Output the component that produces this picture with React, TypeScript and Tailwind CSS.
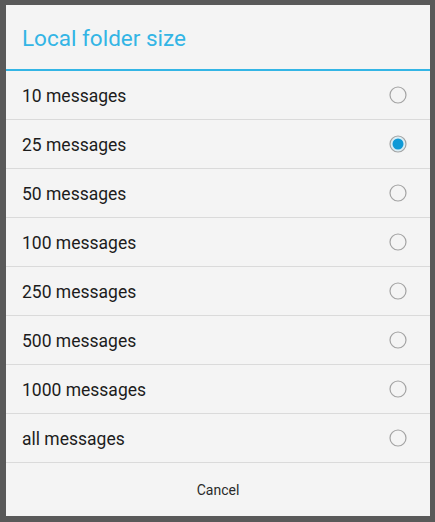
import React, { useState } from "react";

const options = [
  "10 messages",
  "25 messages",
  "50 messages",
  "100 messages",
  "250 messages",
  "500 messages",
  "1000 messages",
  "all messages",
];

function Radio({ checked }: { checked: boolean }) {
  return (
    <svg width="18" height="18" viewBox="0 0 18 18" className="shrink-0">
      <circle cx="9" cy="9" r="8" fill={checked ? "#d9edf5" : "none"} stroke="#a3a3a3" strokeWidth="1.2" />
      {checked && <circle cx="9" cy="9" r="5.5" fill="#0f99d6" />}
    </svg>
  );
}

export default function App() {
  const [selected, setSelected] = useState(1);

  return (
    <main className="w-[435px] h-[522px] bg-[#595959] pt-[5px] pl-[6px] font-['Roboto',sans-serif]">
      <div className="w-[424px] h-[511px] bg-[#f4f4f4] flex flex-col">
        {/* Title */}
        <div className="h-[64px] flex items-center pl-[16px] pt-[3px]">
          <h1 className="text-[22.5px] text-[#33b5e5] leading-none">Local folder size</h1>
        </div>
        <div className="h-[2px] bg-[#33b5e5]" />

        {/* Options */}
        <ul>
          {options.map((label, i) => (
            <li
              key={label}
              onClick={() => setSelected(i)}
              className="h-[49px] border-b border-[#dadada] flex items-center justify-between pl-[16px] pr-[23px] cursor-pointer"
            >
              <span className="text-[17.5px] text-[#1c1c1c] pt-[2px]">{label}</span>
              <Radio checked={selected === i} />
            </li>
          ))}
        </ul>

        {/* Footer */}
        <button className="flex-1 flex items-center justify-center pt-[2px] text-[14px] text-[#2a2a2a]">
          Cancel
        </button>
      </div>
    </main>
  );
}
